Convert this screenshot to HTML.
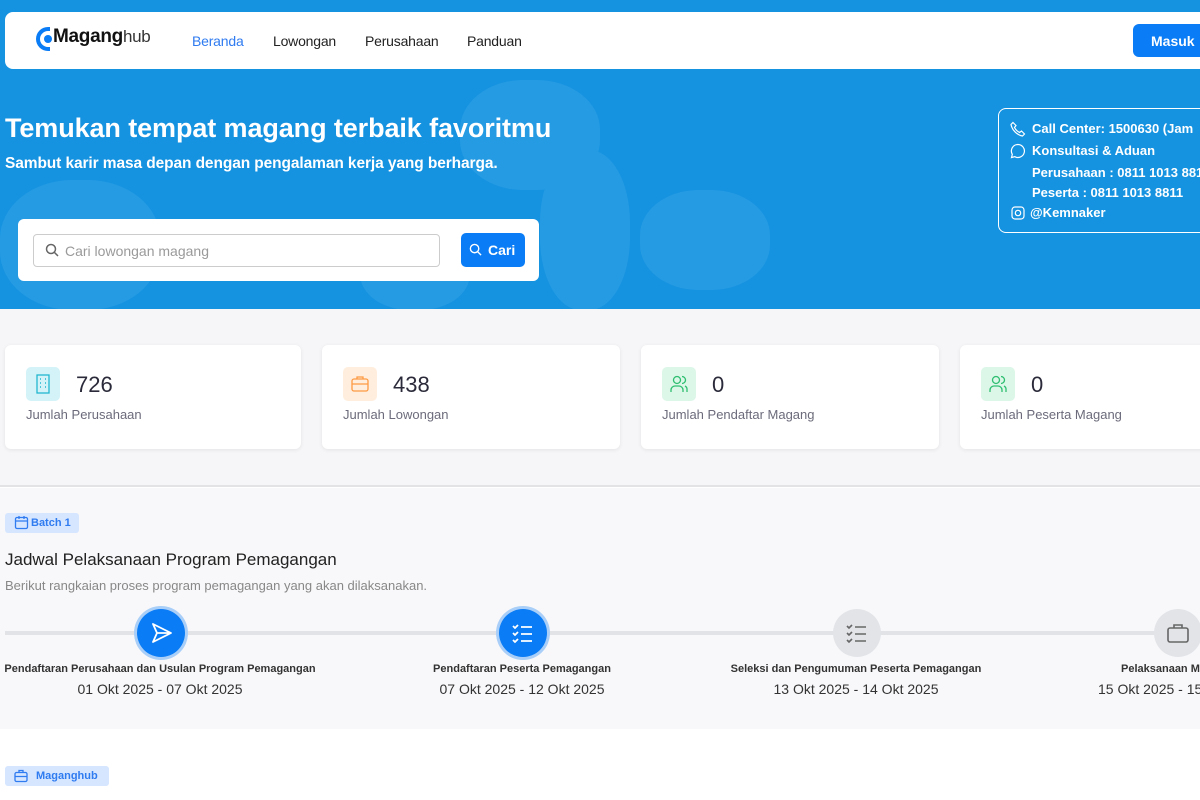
<!DOCTYPE html>
<html><head><meta charset="utf-8"><style>
*{box-sizing:border-box;margin:0;padding:0}
body{width:1200px;height:800px;overflow:hidden;font-family:"Liberation Sans",sans-serif;background:#fff;position:relative}
.abs{position:absolute}
.hero{left:0;top:0;width:1200px;height:309px;background:#1592e0;overflow:hidden}
.blob{position:absolute;background:#259be3;border-radius:45%}
.nav{left:5px;top:12px;width:1210px;height:57px;background:#fff;border-radius:8px}
.nav a{position:absolute;top:21px;font-size:14px;color:#222;text-decoration:none;letter-spacing:-0.2px}
.card{background:#fff;border-radius:6px;box-shadow:0 1px 4px rgba(0,0,0,.08);height:104px;top:345px}
.ib{position:absolute;left:21px;top:22px;width:34px;height:34px;border-radius:5px}
.num{position:absolute;left:71px;top:27px;font-size:22px;color:#2a2a3a}
.lbl{position:absolute;left:21px;top:62px;font-size:13px;color:#6b6b7b}
.circ{width:48px;height:48px;border-radius:50%;top:609px}
.blue{background:#0a7cf5;box-shadow:0 0 0 3px #a9cff8}
.grey{background:#e2e4e8}
.tl{font-size:11px;font-weight:bold;color:#333;top:663px;text-align:center;white-space:nowrap}
.td{font-size:14px;color:#333;top:681px;text-align:center;white-space:nowrap}
</style></head><body>
<div class="abs hero">
 <div class="blob" style="left:460px;top:80px;width:140px;height:110px"></div>
 <div class="blob" style="left:540px;top:150px;width:90px;height:160px"></div>
 <div class="blob" style="left:0px;top:180px;width:160px;height:130px"></div>
 <div class="blob" style="left:640px;top:190px;width:130px;height:100px"></div>
 <div class="blob" style="left:360px;top:230px;width:110px;height:80px"></div>
</div>
<div class="abs nav">
 <div class="abs" style="left:31px;top:15px;width:14px;height:24px;border:4px solid #0a7cf5;border-right:none;border-radius:12px 0 0 12px"></div>
 <div class="abs" style="left:39px;top:23px;width:8px;height:8px;border-radius:50%;background:#0a7cf5"></div>
 <div class="abs" style="left:48px;top:14px;font-size:19px;font-weight:bold;color:#111;letter-spacing:-0.3px">Magang<span style="font-weight:normal;color:#333;font-size:17px">hub</span></div>
 <a style="left:187px;color:#2f7bf0">Beranda</a>
 <a style="left:268px">Lowongan</a>
 <a style="left:360px">Perusahaan</a>
 <a style="left:462px">Panduan</a>
 <div class="abs" style="left:1128px;top:12px;width:90px;height:33px;background:#0a7cf5;border-radius:6px;color:#fff;font-size:14px;font-weight:bold;padding:9px 0 0 18px">Masuk</div>
</div>
<div class="abs" style="left:5px;top:113px;font-size:27px;font-weight:bold;color:#fff;letter-spacing:-0.1px">Temukan tempat magang terbaik favoritmu</div>
<div class="abs" style="left:5px;top:155px;font-size:15.5px;font-weight:bold;color:#fff;letter-spacing:-0.1px">Sambut karir masa depan dengan pengalaman kerja yang berharga.</div>
<div class="abs" style="left:18px;top:219px;width:521px;height:62px;background:#fff;border-radius:6px"></div>
<div class="abs" style="left:33px;top:234px;width:407px;height:33px;border:1px solid #ccc;border-radius:4px;font-size:14px;color:#9a9a9a;padding:8px 0 0 31px">Cari lowongan magang</div>
<svg class="abs" style="left:45px;top:243px" width="14" height="14" viewBox="0 0 14 14"><circle cx="6" cy="6" r="4.5" fill="none" stroke="#666" stroke-width="1.5"/><path d="M9.5 9.5L13 13" stroke="#666" stroke-width="1.5"/></svg>
<div class="abs" style="left:461px;top:233px;width:64px;height:34px;background:#0a7cf5;border-radius:5px;color:#fff;font-size:14px;font-weight:bold;padding:9px 0 0 27px">Cari</div>
<svg class="abs" style="left:469px;top:243px" width="13" height="13" viewBox="0 0 14 14"><circle cx="6" cy="6" r="4.5" fill="none" stroke="#fff" stroke-width="1.5"/><path d="M9.5 9.5L13 13" stroke="#fff" stroke-width="1.5"/></svg>
<div class="abs" style="left:998px;top:108px;width:220px;height:125px;border:1.5px solid #fff;border-radius:8px;color:#fff;font-size:13px;font-weight:bold">
 <div class="abs" style="left:33px;top:12px;white-space:nowrap">Call Center: 1500630 (Jam</div>
 <div class="abs" style="left:33px;top:34px">Konsultasi &amp; Aduan</div>
 <div class="abs" style="left:33px;top:56px;white-space:nowrap">Perusahaan : 0811 1013 881</div>
 <div class="abs" style="left:33px;top:76px">Peserta : 0811 1013 8811</div>
 <div class="abs" style="left:31px;top:96px">@Kemnaker</div>
 <svg class="abs" style="left:11px;top:12px" width="16" height="16" viewBox="0 0 16 16"><path d="M3 1.5l3 3-1.5 2c1 2 3 4 5 5l2-1.5 3 3-2 2C7 14 2 9 1 3.5z" fill="none" stroke="#fff" stroke-width="1.2"/></svg>
 <svg class="abs" style="left:11px;top:34px" width="16" height="16" viewBox="0 0 16 16"><path d="M8 1.5a6.5 6.5 0 1 1-3.2 12.2L1.5 14.5l.8-3.2A6.5 6.5 0 0 1 8 1.5z" fill="none" stroke="#fff" stroke-width="1.2"/></svg>
 <svg class="abs" style="left:12px;top:97px" width="14" height="14" viewBox="0 0 14 14"><rect x="1" y="1" width="12" height="12" rx="3" fill="none" stroke="#fff" stroke-width="1.2"/><circle cx="7" cy="7" r="2.7" fill="none" stroke="#fff" stroke-width="1.2"/></svg>
</div>
<div class="abs" style="left:0;top:309px;width:1200px;height:178px;background:#f6f6f8;border-bottom:2px solid #e3e3e6"></div>
<div class="abs card" style="left:5px;width:296px"><div class="ib" style="background:#d3f3f8"><svg width="34" height="34"><rect x="11" y="8" width="12" height="18" fill="none" stroke="#22b8cf" stroke-width="1.3"/><path d="M14 12h1M19 12h1M14 16h1M19 16h1M14 20h1M19 20h1" stroke="#22b8cf" stroke-width="1.5"/></svg></div><div class="num">726</div><div class="lbl">Jumlah Perusahaan</div></div>
<div class="abs card" style="left:322px;width:298px"><div class="ib" style="background:#ffeedd"><svg width="34" height="34"><rect x="9" y="12" width="16" height="12" rx="2" fill="none" stroke="#fd9a43" stroke-width="1.3"/><path d="M14 12v-2h6v2M9 17h16" stroke="#fd9a43" stroke-width="1.3" fill="none"/></svg></div><div class="num">438</div><div class="lbl">Jumlah Lowongan</div></div>
<div class="abs card" style="left:641px;width:298px"><div class="ib" style="background:#dcf6e8"><svg width="34" height="34"><circle cx="15" cy="13" r="3.5" fill="none" stroke="#2fbf71" stroke-width="1.3"/><path d="M9 25v-2a4 4 0 0 1 4-4h4a4 4 0 0 1 4 4v2M20 9.5a3.5 3.5 0 0 1 0 7M23 19a4 4 0 0 1 2 4v2" fill="none" stroke="#2fbf71" stroke-width="1.3"/></svg></div><div class="num">0</div><div class="lbl">Jumlah Pendaftar Magang</div></div>
<div class="abs card" style="left:960px;width:260px"><div class="ib" style="background:#dcf6e8"><svg width="34" height="34"><circle cx="15" cy="13" r="3.5" fill="none" stroke="#2fbf71" stroke-width="1.3"/><path d="M9 25v-2a4 4 0 0 1 4-4h4a4 4 0 0 1 4 4v2M20 9.5a3.5 3.5 0 0 1 0 7M23 19a4 4 0 0 1 2 4v2" fill="none" stroke="#2fbf71" stroke-width="1.3"/></svg></div><div class="num">0</div><div class="lbl">Jumlah Peserta Magang</div></div>
<div class="abs" style="left:0;top:488px;width:1200px;height:241px;background:#f8f8fa"></div>
<div class="abs" style="left:5px;top:513px;width:74px;height:20px;background:#d6e6ff;border-radius:3px;font-size:11px;color:#2f7bf0;padding:4px 0 0 26px;font-weight:bold">Batch 1</div>
<svg class="abs" style="left:14px;top:515px" width="15" height="15" viewBox="0 0 15 15"><rect x="1.5" y="2.5" width="12" height="11" rx="1.5" fill="none" stroke="#2f7bf0" stroke-width="1.3"/><path d="M1.5 6h12M5 1v3M10 1v3" stroke="#2f7bf0" stroke-width="1.3"/></svg>
<div class="abs" style="left:5px;top:550px;font-size:17px;color:#222">Jadwal Pelaksanaan Program Pemagangan</div>
<div class="abs" style="left:5px;top:578px;font-size:13px;color:#888">Berikut rangkaian proses program pemagangan yang akan dilaksanakan.</div>
<div class="abs" style="left:5px;top:631px;width:1200px;height:4px;background:#e1e3e7"></div>
<div class="abs circ blue" style="left:137px"><svg width="48" height="48"><path d="M16 15l18 9-18 9 4-9z M20 24h14" fill="none" stroke="#fff" stroke-width="1.8" stroke-linejoin="round"/></svg></div>
<div class="abs circ blue" style="left:499px"><svg width="48" height="48"><path d="M14 17l2 2 3-3M14 24l2 2 3-3M14 31l2 2 3-3M22 18h11M22 25h11M22 32h11" fill="none" stroke="#fff" stroke-width="1.8"/></svg></div>
<div class="abs circ grey" style="left:833px"><svg width="48" height="48"><path d="M14 17l2 2 3-3M14 24l2 2 3-3M14 31l2 2 3-3M22 18h11M22 25h11M22 32h11" fill="none" stroke="#666" stroke-width="1.6"/></svg></div>
<div class="abs circ grey" style="left:1154px"><svg width="48" height="48"><rect x="14" y="19" width="20" height="14" rx="2" fill="none" stroke="#666" stroke-width="1.6"/><path d="M20 19v-3h8v3" fill="none" stroke="#666" stroke-width="1.6"/></svg></div>
<div class="abs tl" style="left:-40px;width:400px">Pendaftaran Perusahaan dan Usulan Program Pemagangan</div>
<div class="abs td" style="left:-40px;width:400px">01 Okt 2025 - 07 Okt 2025</div>
<div class="abs tl" style="left:322px;width:400px">Pendaftaran Peserta Pemagangan</div>
<div class="abs td" style="left:322px;width:400px">07 Okt 2025 - 12 Okt 2025</div>
<div class="abs tl" style="left:656px;width:400px">Seleksi dan Pengumuman Peserta Pemagangan</div>
<div class="abs td" style="left:656px;width:400px">13 Okt 2025 - 14 Okt 2025</div>
<div class="abs tl" style="left:1121px">Pelaksanaan M</div>
<div class="abs td" style="left:1098px">15 Okt 2025 - 15 .</div>
<div class="abs" style="left:5px;top:766px;width:104px;height:20px;background:#d6e6ff;border-radius:3px;font-size:11px;color:#2f7bf0;padding:4px 0 0 31px;font-weight:bold">Maganghub</div>
<svg class="abs" style="left:13px;top:768px" width="16" height="16" viewBox="0 0 16 16"><rect x="2" y="4.5" width="12" height="9" rx="1.5" fill="none" stroke="#2f7bf0" stroke-width="1.3"/><path d="M6 4.5v-2h4v2M2 8.5h12" fill="none" stroke="#2f7bf0" stroke-width="1.3"/></svg>
</body></html>
